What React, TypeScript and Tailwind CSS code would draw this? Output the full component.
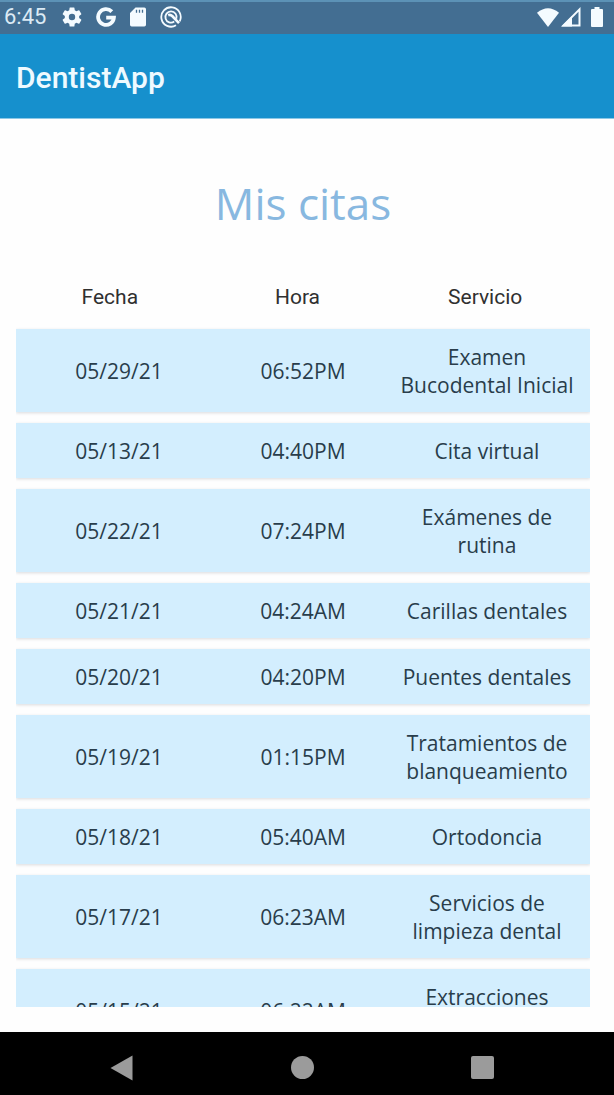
const appointments = [
  { date: "05/29/21", time: "06:52PM", service: "Examen Bucodental Inicial" },
  { date: "05/13/21", time: "04:40PM", service: "Cita virtual" },
  { date: "05/22/21", time: "07:24PM", service: "Exámenes de rutina" },
  { date: "05/21/21", time: "04:24AM", service: "Carillas dentales" },
  { date: "05/20/21", time: "04:20PM", service: "Puentes dentales" },
  { date: "05/19/21", time: "01:15PM", service: "Tratamientos de blanqueamiento" },
  { date: "05/18/21", time: "05:40AM", service: "Ortodoncia" },
  { date: "05/17/21", time: "06:23AM", service: "Servicios de limpieza dental" },
  { date: "05/15/21", time: "06:22AM", service: "Extracciones dentales" },
];

function GearIcon() {
  return (
    <svg viewBox="2 2 20 20" className="size-5" fill="currentColor" aria-hidden="true">
      <path d="M19.14 12.94c.04-.3.06-.61.06-.94s-.02-.64-.07-.94l2.03-1.58a.49.49 0 0 0 .12-.61l-1.92-3.32a.49.49 0 0 0-.59-.22l-2.39.96a7 7 0 0 0-1.62-.94l-.36-2.54a.48.48 0 0 0-.48-.41h-3.84a.48.48 0 0 0-.47.41l-.36 2.54c-.59.24-1.13.57-1.62.94l-2.39-.96a.48.48 0 0 0-.59.22L2.74 8.87a.48.48 0 0 0 .12.61l2.03 1.58c-.05.3-.09.63-.09.94s.02.64.07.94l-2.03 1.58a.49.49 0 0 0-.12.61l1.92 3.32c.12.22.37.29.59.22l2.39-.96c.5.38 1.03.7 1.62.94l.36 2.54c.05.24.24.41.48.41h3.84c.24 0 .44-.17.47-.41l.36-2.54a7 7 0 0 0 1.62-.94l2.39.96c.22.08.47 0 .59-.22l1.92-3.32a.48.48 0 0 0-.12-.61zM12 15.2a3.2 3.2 0 1 1 0-6.4 3.2 3.2 0 0 1 0 6.4z" />
    </svg>
  );
}

function GoogleIcon() {
  return (
    <svg viewBox="0 0 20 20" className="size-5" fill="none" stroke="currentColor" strokeWidth="3.8" aria-hidden="true">
      <path d="M15.8 4.6A7.9 7.9 0 1 0 17.9 10.6H10.2" />
    </svg>
  );
}

function SdCardIcon() {
  return (
    <svg viewBox="0 0 16 20" className="h-5 w-4" aria-hidden="true">
      <path fill="currentColor" d="M5.500 0.500h8.800A1.700 1.700 0 0 1 16 2.200v15.600a1.700 1.700 0 0 1-1.700 1.700H1.700A1.700 1.700 0 0 1 0 17.800V6z" />
      <path stroke="#436e92" strokeWidth="1.300" d="M6.500 2.800v3M9.500 2.800v3M12.500 2.800v3" />
    </svg>
  );
}

function DebugIcon() {
  return (
    <svg viewBox="0 0 22 22" className="size-[22px]" fill="none" stroke="currentColor" aria-hidden="true">
      <path strokeWidth="1.8" d="M16 19.300A9.700 9.700 0 1 1 19.700 15.300" />
      <path strokeWidth="1.800" d="M14.200 15.600A5.600 5.600 0 1 1 16.300 12.800" />
      <path strokeWidth="2.600" d="M8.200 9.200q2.200-1 4 .8L19 17.200" />
    </svg>
  );
}

function WifiIcon() {
  return (
    <svg viewBox="0 0 22 19" className="h-[19px] w-[22px]" fill="currentColor" aria-hidden="true">
      <path d="M0 4.800Q11-4.400 22 4.800L11 19z" />
    </svg>
  );
}

function SignalIcon() {
  return (
    <svg viewBox="0 0 20 20" className="size-5" aria-hidden="true">
      <path fill="none" stroke="currentColor" strokeWidth="2" d="M2.400 18.500H18.500V2.400z" />
      <path fill="currentColor" d="M0.500 19.500H11V9z" />
    </svg>
  );
}

function BatteryIcon() {
  return (
    <svg viewBox="0 0 12 20" className="h-5 w-3" fill="currentColor" aria-hidden="true">
      <path d="M3.500 0h5v2H11a1 1 0 0 1 1 1v16a1 1 0 0 1-1 1H1a1 1 0 0 1-1-1V3a1 1 0 0 1 1-1h2.500z" />
    </svg>
  );
}

export default function App() {
  return (
    <div className="flex h-screen flex-col overflow-hidden bg-[#fefefe] font-['Open_Sans',sans-serif]">
      <div className="flex h-[34px] shrink-0 items-center justify-between border-t-2 border-[#5c92b6] bg-[#436e92] pr-[11px] pb-0.5 pl-1 text-[#f4fbff]">
        <div className="flex items-center">
          <time className="w-[58px] font-['Roboto',sans-serif] text-[22px] leading-7 text-[#dbeaf5]">6:45</time>
          <div className="flex items-center gap-[14px]">
            <GearIcon />
            <GoogleIcon />
            <SdCardIcon />
            <DebugIcon />
          </div>
        </div>
        <div className="flex items-center">
          <WifiIcon />
          <div className="mr-[10px] ml-0.5">
            <SignalIcon />
          </div>
          <BatteryIcon />
        </div>
      </div>

      <header className="flex h-[85px] shrink-0 items-center border-b border-[#8cc8e6] bg-[#1690cd] px-4">
        <span className="pt-1 font-['Roboto',sans-serif] text-[30px] leading-9 font-medium text-[#eefaff]">DentistApp</span>
      </header>

      <main className="flex min-h-0 flex-1 flex-col pt-[54px] pr-6 pb-[25px] pl-4">
        <h1 className="text-center text-[44px] leading-[60px] font-medium text-[#88b8e0]">Mis citas</h1>
        <div className="mt-12 min-h-0 flex-1 overflow-y-auto [scrollbar-width:none]">
          <table className="block text-[21px] text-[#293d4b]">
            <thead className="block">
              <tr className="grid h-12 grid-cols-3 pr-[11px] font-['Roboto',sans-serif] leading-8 text-[#303030]">
                <th scope="col" className="font-normal">Fecha</th>
                <th scope="col" className="font-normal">Hora</th>
                <th scope="col" className="font-normal">Servicio</th>
              </tr>
            </thead>
            <tbody className="flex flex-col gap-[11px]">
              {appointments.map((item) => (
                <tr
                  key={item.date}
                  className="grid grid-cols-3 items-center bg-[#d3eefe] px-[11px] pt-[14px] pb-[13px] text-center leading-7 shadow-[0_1px_3px_#d9dadd]"
                >
                  <td>{item.date}</td>
                  <td>{item.time}</td>
                  <td className="px-1">{item.service}</td>
                </tr>
              ))}
            </tbody>
          </table>
        </div>
      </main>

      <nav className="grid h-[63px] shrink-0 grid-cols-3 items-center bg-black pt-2 pr-[42px] pl-8 text-[#9b9b9b]">
        <button type="button" aria-label="Atrás" className="flex h-full items-center justify-center">
          <svg viewBox="0 0 24 26" className="h-[26px] w-6" fill="currentColor" aria-hidden="true">
            <path d="M22.500 0.500V25.500L0.500 13z" />
          </svg>
        </button>
        <button type="button" aria-label="Inicio" className="flex h-full items-center justify-center">
          <span className="size-[23px] rounded-full bg-current" />
        </button>
        <button type="button" aria-label="Recientes" className="flex h-full items-center justify-center">
          <span className="size-[23px] rounded-xs bg-current" />
        </button>
      </nav>
    </div>
  );
}
